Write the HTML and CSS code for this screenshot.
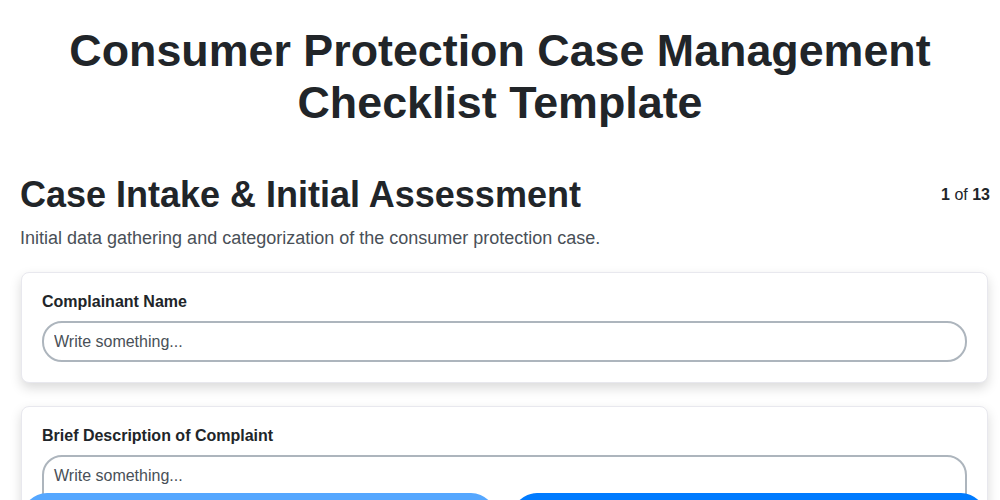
FILE: index.html
```html
<!DOCTYPE html>
<html lang="en">
<head>
<meta charset="utf-8">
<title>Consumer Protection Case Management Checklist Template</title>
<link rel="stylesheet" href="styles.css">
</head>
<body>
<h1 class="page-title">Consumer Protection Case Management Checklist Template</h1>
<main class="section">
  <div class="section-head">
    <h2 class="section-title">Case Intake &amp; Initial Assessment</h2>
    <div class="counter"><b>1</b> of <b>13</b></div>
  </div>
  <p class="section-desc">Initial data gathering and categorization of the consumer protection case.</p>
  <div class="card">
    <label class="field-label">Complainant Name</label>
    <input class="field-input" type="text" placeholder="Write something...">
  </div>
  <div class="card">
    <label class="field-label">Brief Description of Complaint</label>
    <textarea class="field-textarea" placeholder="Write something..."></textarea>
  </div>
</main>
<nav class="nav-bar">
  <button class="btn btn-prev" aria-label="Previous"></button>
  <button class="btn btn-next" aria-label="Next"></button>
</nav>
</body>
</html>
```

FILE: styles.css
```css
* { box-sizing: border-box; }
body {
  margin: 0;
  font-family: "Liberation Sans", Arial, sans-serif;
  color: #212529;
  background: #fff;
}
.page-title {
  margin: 25px 40px 0;
  font-size: 44.8px;
  line-height: 1.15;
  font-weight: 700;
  text-align: center;
  color: #212529;
}
.section {
  padding: 45px 10px 120px 20px;
}
.section-head {
  display: flex;
  align-items: center;
  justify-content: space-between;
}
.section-title {
  margin: 0;
  font-size: 36px;
  line-height: 1.2;
  font-weight: 700;
}
.counter {
  font-size: 16px;
  color: #212529;
}
.section-desc {
  margin: 12px 0 23px;
  font-size: 18px;
  color: #495057;
}
.card {
  margin: 0 2px 23px 1px;
  padding: 20px;
  background: #fff;
  border: 1px solid #e8e8ee;
  border-radius: 8px;
  box-shadow: 0 5px 12px rgba(0, 0, 0, 0.15);
}
.field-label {
  display: block;
  margin-bottom: 10px;
  font-size: 16px;
  font-weight: 700;
  color: #212529;
}
.field-input,
.field-textarea {
  display: block;
  width: 100%;
  font-family: "Liberation Sans", Arial, sans-serif;
  font-size: 16px;
  color: #495057;
  border: 2px solid #adb5bd;
  background: #fff;
  outline: none;
}
.field-input {
  height: 41px;
  padding: 0 10px;
  border-radius: 20px;
}
.field-textarea {
  height: 100px;
  padding: 10px 10px;
  border-radius: 20px;
  resize: none;
}
.field-input::placeholder,
.field-textarea::placeholder {
  color: #495057;
  opacity: 1;
}
.nav-bar {
  position: fixed;
  left: 22px;
  right: 14px;
  top: 493px;
  display: flex;
  gap: 16px;
}
.btn {
  flex: 1;
  height: 50px;
  border: none;
  border-radius: 25px;
}
.btn-prev { background: #55a7ff; }
.btn-next { background: #007bff; }
```
